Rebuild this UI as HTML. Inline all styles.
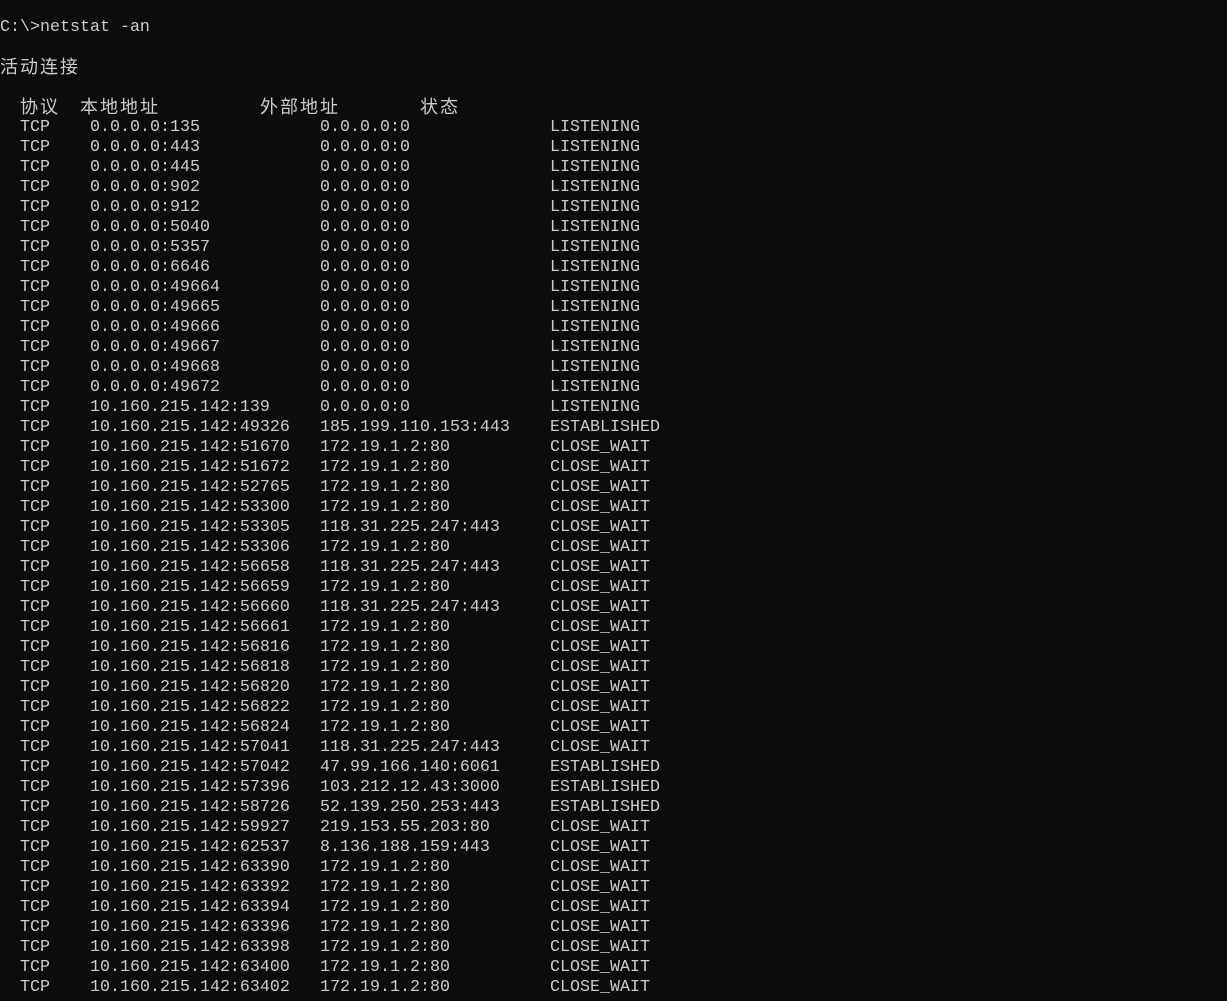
<!DOCTYPE html>
<html><head><meta charset="utf-8"><style>
html,body{margin:0;padding:0;background:#0c0c0c;width:1227px;height:1001px;overflow:hidden}
body{color:#cccccc;font-family:"Liberation Mono",monospace;font-size:16.667px;position:relative}
.l{position:absolute;height:20px;line-height:20px;white-space:pre}
.c{position:absolute;top:0;white-space:pre}
.cjk{font-family:"Liberation Sans","Noto Sans CJK SC",sans-serif;font-size:18px;letter-spacing:2px}
</style></head><body>
<div class="l" style="top:18px;left:0">C:\&gt;netstat -an</div>
<div class="l cjk" style="top:57px;left:0">活动连接</div>
<div class="l cjk" style="top:97px;left:0;width:600px"><span class="c" style="left:20px">协议</span><span class="c" style="left:80px">本地地址</span><span class="c" style="left:260px">外部地址</span><span class="c" style="left:420px">状态</span></div>
<div id="rows"></div>
<script>
var d=[
["0.0.0.0:135","0.0.0.0:0","LISTENING"],
["0.0.0.0:443","0.0.0.0:0","LISTENING"],
["0.0.0.0:445","0.0.0.0:0","LISTENING"],
["0.0.0.0:902","0.0.0.0:0","LISTENING"],
["0.0.0.0:912","0.0.0.0:0","LISTENING"],
["0.0.0.0:5040","0.0.0.0:0","LISTENING"],
["0.0.0.0:5357","0.0.0.0:0","LISTENING"],
["0.0.0.0:6646","0.0.0.0:0","LISTENING"],
["0.0.0.0:49664","0.0.0.0:0","LISTENING"],
["0.0.0.0:49665","0.0.0.0:0","LISTENING"],
["0.0.0.0:49666","0.0.0.0:0","LISTENING"],
["0.0.0.0:49667","0.0.0.0:0","LISTENING"],
["0.0.0.0:49668","0.0.0.0:0","LISTENING"],
["0.0.0.0:49672","0.0.0.0:0","LISTENING"],
["10.160.215.142:139","0.0.0.0:0","LISTENING"],
["10.160.215.142:49326","185.199.110.153:443","ESTABLISHED"],
["10.160.215.142:51670","172.19.1.2:80","CLOSE_WAIT"],
["10.160.215.142:51672","172.19.1.2:80","CLOSE_WAIT"],
["10.160.215.142:52765","172.19.1.2:80","CLOSE_WAIT"],
["10.160.215.142:53300","172.19.1.2:80","CLOSE_WAIT"],
["10.160.215.142:53305","118.31.225.247:443","CLOSE_WAIT"],
["10.160.215.142:53306","172.19.1.2:80","CLOSE_WAIT"],
["10.160.215.142:56658","118.31.225.247:443","CLOSE_WAIT"],
["10.160.215.142:56659","172.19.1.2:80","CLOSE_WAIT"],
["10.160.215.142:56660","118.31.225.247:443","CLOSE_WAIT"],
["10.160.215.142:56661","172.19.1.2:80","CLOSE_WAIT"],
["10.160.215.142:56816","172.19.1.2:80","CLOSE_WAIT"],
["10.160.215.142:56818","172.19.1.2:80","CLOSE_WAIT"],
["10.160.215.142:56820","172.19.1.2:80","CLOSE_WAIT"],
["10.160.215.142:56822","172.19.1.2:80","CLOSE_WAIT"],
["10.160.215.142:56824","172.19.1.2:80","CLOSE_WAIT"],
["10.160.215.142:57041","118.31.225.247:443","CLOSE_WAIT"],
["10.160.215.142:57042","47.99.166.140:6061","ESTABLISHED"],
["10.160.215.142:57396","103.212.12.43:3000","ESTABLISHED"],
["10.160.215.142:58726","52.139.250.253:443","ESTABLISHED"],
["10.160.215.142:59927","219.153.55.203:80","CLOSE_WAIT"],
["10.160.215.142:62537","8.136.188.159:443","CLOSE_WAIT"],
["10.160.215.142:63390","172.19.1.2:80","CLOSE_WAIT"],
["10.160.215.142:63392","172.19.1.2:80","CLOSE_WAIT"],
["10.160.215.142:63394","172.19.1.2:80","CLOSE_WAIT"],
["10.160.215.142:63396","172.19.1.2:80","CLOSE_WAIT"],
["10.160.215.142:63398","172.19.1.2:80","CLOSE_WAIT"],
["10.160.215.142:63400","172.19.1.2:80","CLOSE_WAIT"],
["10.160.215.142:63402","172.19.1.2:80","CLOSE_WAIT"]];
var h="";
for(var i=0;i<d.length;i++){var t=118+i*20;
h+='<div class="l" style="top:'+t+'px;left:0;width:800px"><span class="c" style="left:20px">TCP</span><span class="c" style="left:90px">'+d[i][0]+'</span><span class="c" style="left:320px">'+d[i][1]+'</span><span class="c" style="left:550px">'+d[i][2]+'</span></div>';}
document.getElementById("rows").innerHTML=h;
</script>
</body></html>
